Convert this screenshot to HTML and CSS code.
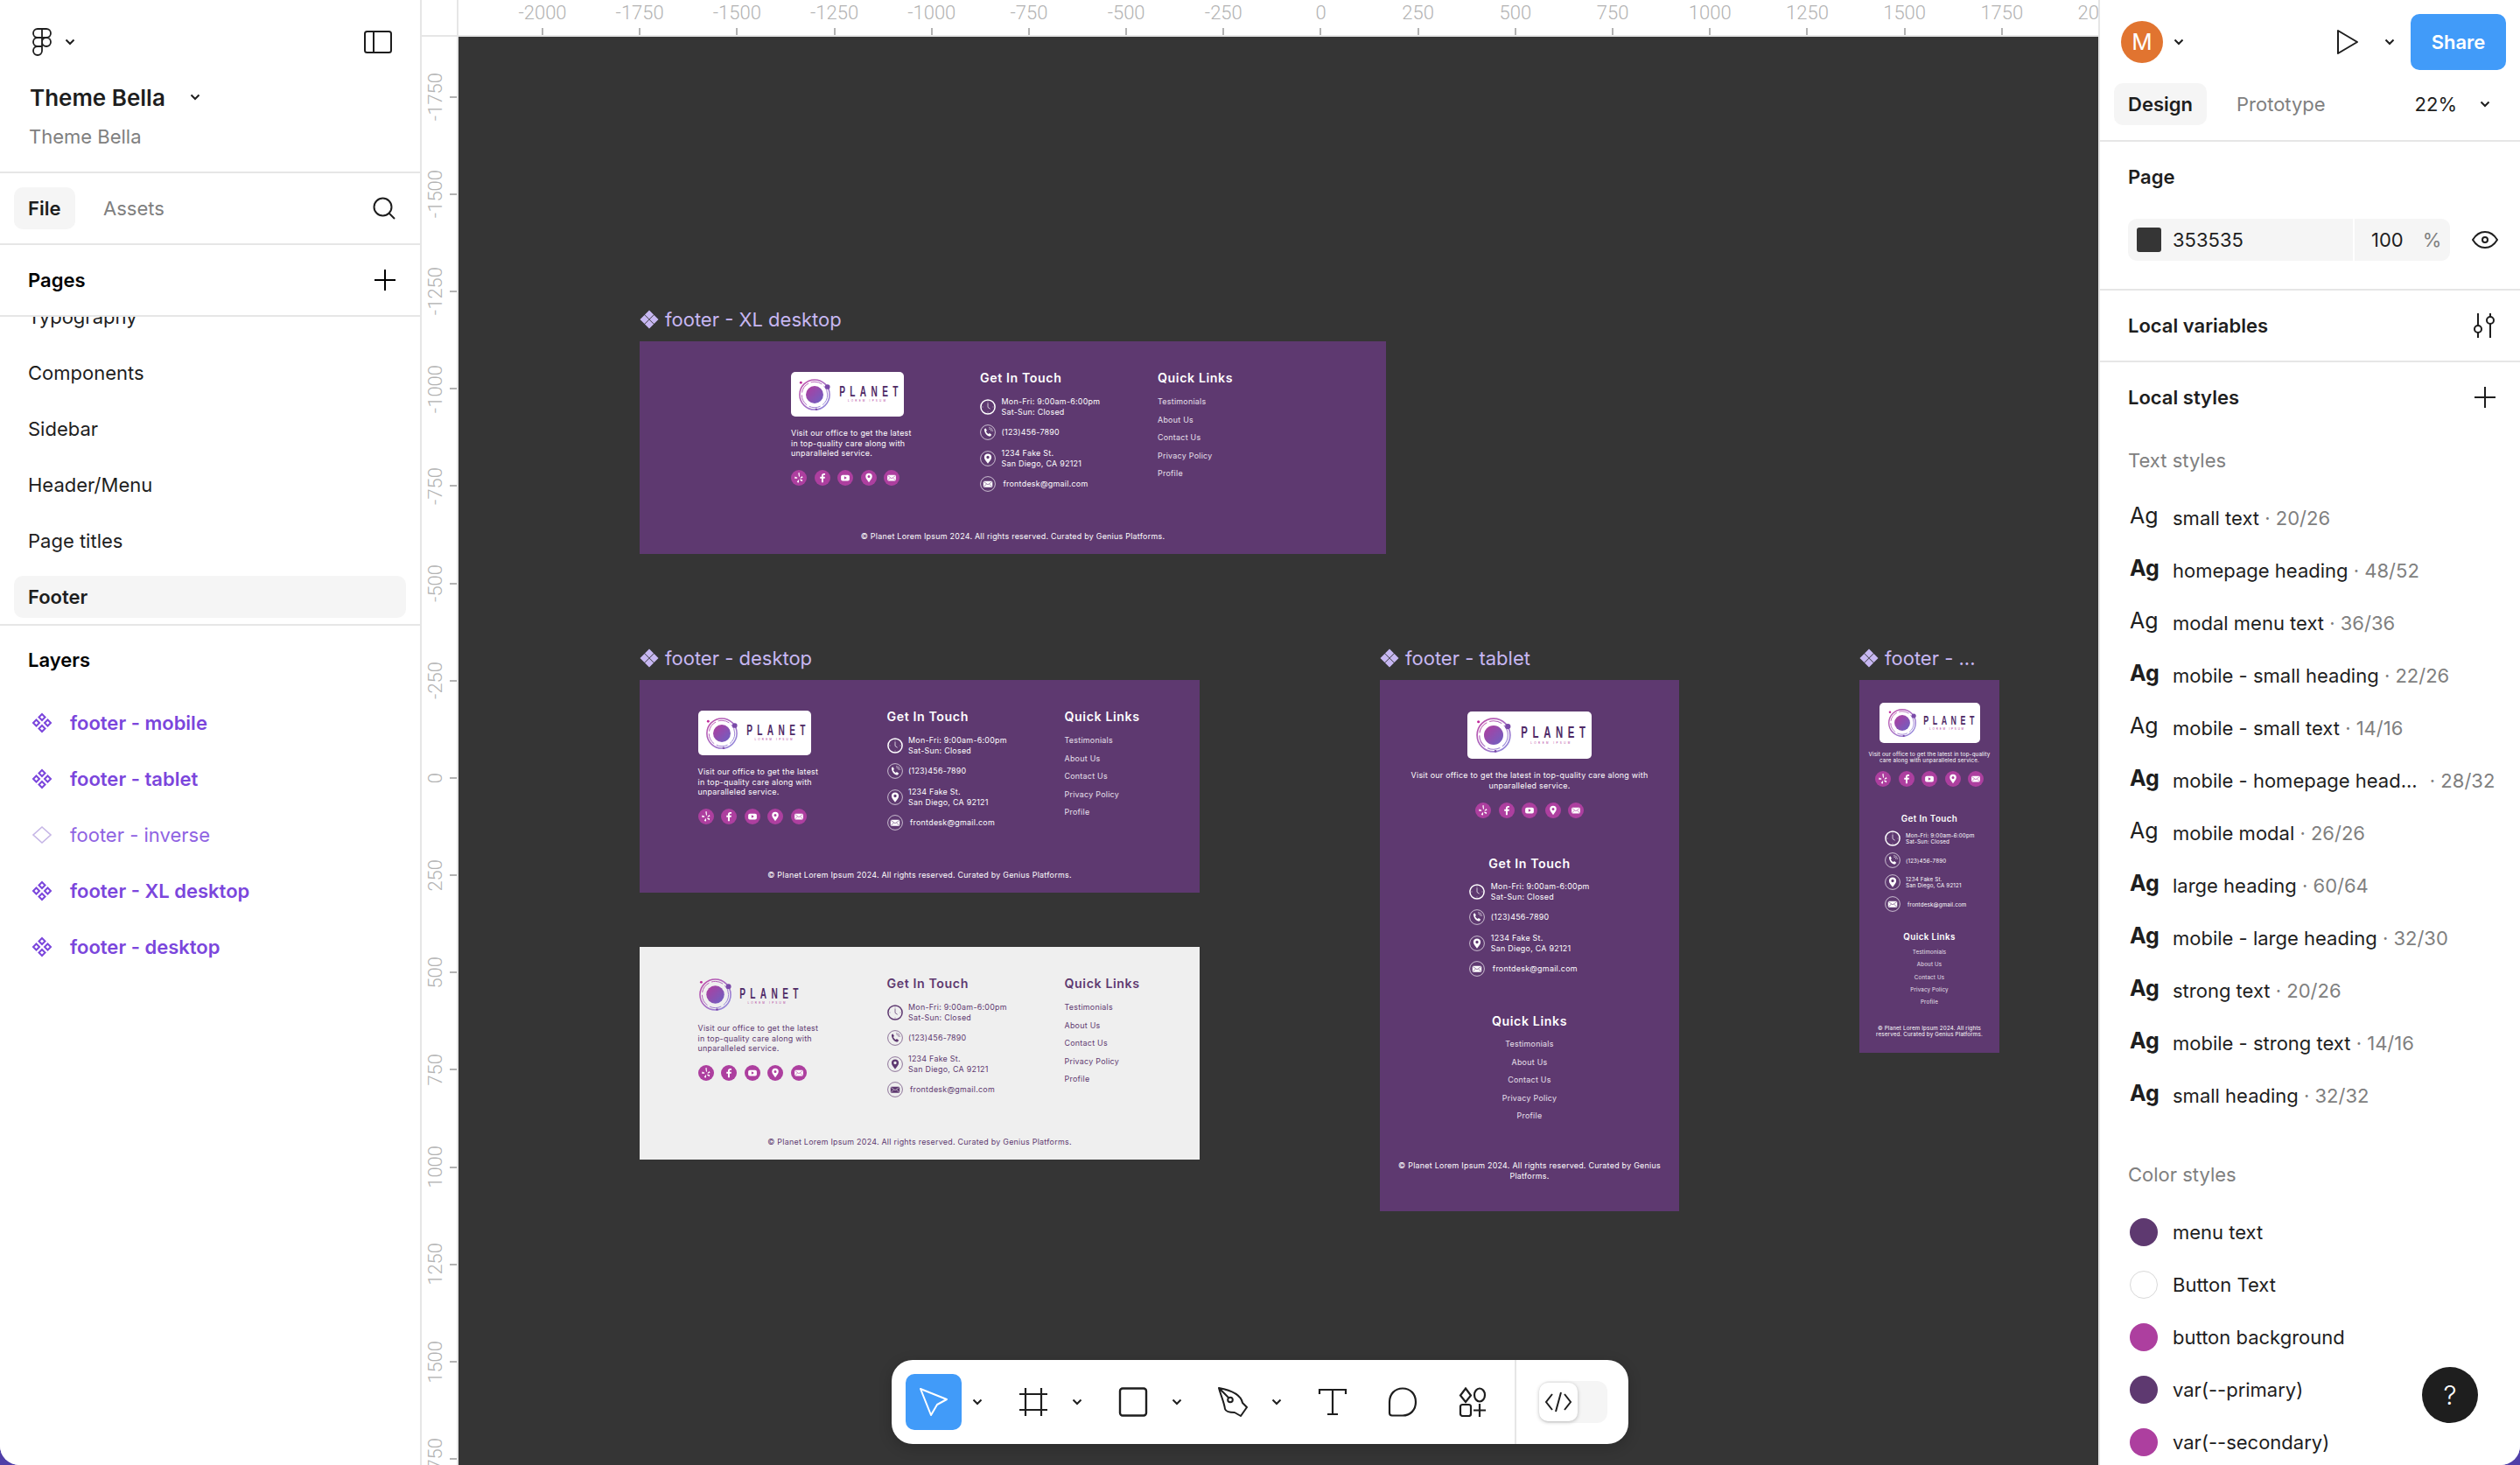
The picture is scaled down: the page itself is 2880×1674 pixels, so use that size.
FILE: index.html
```html
<!DOCTYPE html>
<html lang="en">
<head>
    <meta charset="UTF-8">
    <meta name="viewport" content="width=device-width, initial-scale=1.0">
    <title>Theme Bella</title>
    <link rel="stylesheet" href="styles.css">
</head>
<body>
    <!-- shared icons -->
    <svg class="sprite" aria-hidden="true">
        <defs>
            <linearGradient id="discGrad" x1="0" y1="0" x2="1" y2="1">
                <stop offset="0" stop-color="#b23c9c"/>
                <stop offset="1" stop-color="#6a62c4"/>
            </linearGradient>
            <linearGradient id="ringGrad" x1="0" y1="0" x2="1" y2="1">
                <stop offset="0" stop-color="#c04aa6"/>
                <stop offset="1" stop-color="#8f8fe0"/>
            </linearGradient>
        </defs>
        <symbol id="i-chev" viewBox="0 0 12 8"><path d="M1.5 1.5 6 6l4.500-4.500" fill="none" stroke="currentColor" stroke-width="2"/></symbol>
        <symbol id="i-comp" viewBox="0 0 24 24">
            <g fill="none" stroke="currentColor" stroke-width="2">
                <path d="M12 2l3.500 3.500L12 9 8.500 5.500z"/>
                <path d="M12 15l3.500 3.500L12 22l-3.500-3.500z"/>
                <path d="M5.500 8.500 9 12l-3.500 3.500L2 12z"/>
                <path d="M18.500 8.500 22 12l-3.500 3.500L15 12z"/>
            </g>
        </symbol>
        <symbol id="i-comp-fill" viewBox="0 0 24 24">
            <path d="M12 .5l5.500 5.500L12 11.500 6.500 6zM12 12.500l5.500 5.500L12 23.500 6.500 18zM6 6.500l5.500 5.500L6 17.500.5 12zM18 6.500l5.500 5.500-5.500 5.500-5.500-5.500z" fill="currentColor"/>
        </symbol>
        <symbol id="logo-mark" viewBox="0 0 40 40">
            <circle cx="20" cy="20" r="18" fill="none" stroke="url(#ringGrad)" stroke-width="1.600"/>
            <circle cx="20" cy="20" r="15.500" fill="none" stroke="url(#ringGrad)" stroke-width="1" stroke-dasharray="14 3"/>
            <circle cx="20" cy="20" r="10.500" fill="url(#discGrad)"/>
            <circle cx="35.500" cy="10.500" r="3" fill="#7a4aa8"/>
            <circle cx="3.500" cy="5.500" r="1.500" fill="#c02a9a"/>
            <circle cx="22" cy="37.500" r="1.300" fill="#7a4aa8"/>
        </symbol>
        <symbol id="c-clock" viewBox="0 0 24 24">
            <circle cx="12" cy="12" r="10.800" fill="none" stroke="currentColor" stroke-width="2"/>
            <path d="M12 6v6.500l3.500 2.500M12 3.500v1M12 19.500v1M3.500 12h1M19.500 12h1" fill="none" stroke="currentColor" stroke-width="1"/>
        </symbol>
        <symbol id="c-phone" viewBox="0 0 24 24">
            <circle cx="12" cy="12" r="11.200" fill="none" stroke="currentColor" stroke-width=".9"/>
            <path d="M8.500 5.500 10.500 9 9.300 10.500c.7 1.700 2 3 3.700 4l1.600-1.100 3 2.400-1.700 2.300C11.500 18.500 6.500 13 6.500 7.200z" fill="currentColor"/>
            <path d="M13.500 6.500a4.500 4.500 0 0 1 4 4M13.500 4.500a6.500 6.500 0 0 1 6 6" fill="none" stroke="currentColor" stroke-width=".7"/>
        </symbol>
        <symbol id="c-pin" viewBox="0 0 24 24">
            <circle cx="12" cy="12" r="11.200" fill="none" stroke="currentColor" stroke-width=".9"/>
            <path fill-rule="evenodd" d="M12 4.500a5.500 5.500 0 0 1 5.500 5.500c0 3.500-3.500 6.500-5.500 9.500-2-3-5.500-6-5.500-9.500A5.500 5.500 0 0 1 12 4.500zm0 3.300a2.200 2.200 0 1 0 0 4.400 2.200 2.200 0 0 0 0-4.400z" fill="currentColor"/>
        </symbol>
        <symbol id="c-mail" viewBox="0 0 24 24">
            <circle cx="12" cy="12" r="11.200" fill="none" stroke="currentColor" stroke-width=".9"/>
            <rect x="5" y="7.500" width="14" height="9.500" rx="1.500" fill="currentColor"/>
            <path class="mail-cut" d="M5.500 8.500 12 13l6.500-4.500M5.500 16.500 10 12M18.500 16.500 14 12" fill="none" stroke-width=".8"/>
        </symbol>
        <symbol id="s-yelp" viewBox="0 0 24 24">
            <circle cx="12" cy="12" r="12" fill="#ad3f9f"/>
            <path d="M11 4.500l1.800-.5.500 6-1.300.4zM6 10l3.800 1.500-.4 1.500L5.500 13zM9 18.500l2-3.500 1 .8v3.500zM14 14l3.500 1-.5 2.500-3.500-2.300zM14 12l3-2.700 1 2.200-3.500 1.500z" fill="#fff"/>
        </symbol>
        <symbol id="s-fb" viewBox="0 0 24 24">
            <circle cx="12" cy="12" r="12" fill="#ad3f9f"/>
            <path d="M13.200 19v-6h2.300l.4-2.600h-2.700V8.900c0-.8.300-1.300 1.400-1.300h1.400V5.300c-.3 0-1.100-.1-2-.1-2 0-3.400 1.200-3.400 3.500v1.700H8.300V13h2.300v6z" fill="#fff"/>
        </symbol>
        <symbol id="s-yt" viewBox="0 0 24 24">
            <circle cx="12" cy="12" r="12" fill="#ad3f9f"/>
            <rect x="5.500" y="7.500" width="13" height="9" rx="2.500" fill="#fff"/>
            <path d="M10.500 9.800 14.500 12l-4 2.200z" fill="#ad3f9f"/>
        </symbol>
        <symbol id="s-pin" viewBox="0 0 24 24">
            <circle cx="12" cy="12" r="12" fill="#ad3f9f"/>
            <path fill-rule="evenodd" d="M12 5a5 5 0 0 1 5 5c0 3-3 5.500-5 9-2-3.500-5-6-5-9a5 5 0 0 1 5-5zm0 3a2 2 0 1 0 0 4 2 2 0 0 0 0-4z" fill="#fff"/>
        </symbol>
        <symbol id="s-mail" viewBox="0 0 24 24">
            <circle cx="12" cy="12" r="12" fill="#ad3f9f"/>
            <rect x="5.500" y="7.500" width="13" height="9" rx="1.500" fill="#fff"/>
            <path d="M6 8.500 12 13l6-4.500M6 16 10 12M18 16 14 12" fill="none" stroke="#ad3f9f" stroke-width=".8"/>
        </symbol>
    </svg>

    <div class="app">
        <aside class="panel panel-left">
            <div class="file-head">
                <div class="file-top">
                    <svg class="figma-logo" viewBox="0 0 22 32" fill="none" stroke="currentColor" stroke-width="1.800">
                        <path d="M11 1H6a5 5 0 0 0 0 10h5zM11 1h5a5 5 0 0 1 0 10h-5zM11 11H6a5 5 0 0 0 0 10h5zM11 16a5 5 0 1 1 10 0 5 5 0 0 1-10 0zM11 21H6a5 5 0 1 0 5 5z"/>
                    </svg>
                    <svg class="chev chev-logo"><use href="#i-chev"/></svg>
                    <svg class="sidebar-icon" viewBox="0 0 32 26" fill="none" stroke="currentColor" stroke-width="2">
                        <rect x="1" y="1" width="30" height="24" rx="2.500"/>
                        <path d="M11 1v24"/>
                    </svg>
                </div>
                <div class="file-title">Theme Bella <svg class="chev"><use href="#i-chev"/></svg></div>
                <div class="file-sub">Theme Bella</div>
            </div>

            <div class="tabs-row">
                <span class="tab tab-on tab-file">File</span>
                <span class="tab">Assets</span>
                <svg class="search-icon" viewBox="0 0 26 26" fill="none" stroke="currentColor" stroke-width="2">
                    <circle cx="11.500" cy="11.500" r="10"/>
                    <path d="M18.500 18.500l6.500 6.500"/>
                </svg>
            </div>

            <div class="section-head pages-head">
                <span>Pages</span>
                <svg class="plus"><path d="M12 0v24M0 12h24" stroke="currentColor" stroke-width="2"/></svg>
            </div>

            <div class="page-list">
                <div class="page-item">Typography</div>
                <div class="page-item">Components</div>
                <div class="page-item">Sidebar</div>
                <div class="page-item">Header/Menu</div>
                <div class="page-item">Page titles</div>
                <div class="page-item page-on"><span>Footer</span></div>
            </div>

            <div class="layers">
                <div class="layers-title">Layers</div>
                <div class="layer"><svg><use href="#i-comp"/></svg>footer - mobile</div>
                <div class="layer"><svg><use href="#i-comp"/></svg>footer - tablet</div>
                <div class="layer layer-inverse">
                    <svg viewBox="0 0 24 24"><path d="M12 3l10 9-10 9-10-9z" fill="none" stroke="currentColor" stroke-width="1.600"/></svg>footer - inverse
                </div>
                <div class="layer"><svg><use href="#i-comp"/></svg>footer - XL desktop</div>
                <div class="layer"><svg><use href="#i-comp"/></svg>footer - desktop</div>
            </div>
        </aside>

        <div class="ruler-corner"></div>

        <div class="ruler-top">
            <div class="tick-h"><span>-2000</span></div>
            <div class="tick-h"><span>-1750</span></div>
            <div class="tick-h"><span>-1500</span></div>
            <div class="tick-h"><span>-1250</span></div>
            <div class="tick-h"><span>-1000</span></div>
            <div class="tick-h"><span>-750</span></div>
            <div class="tick-h"><span>-500</span></div>
            <div class="tick-h"><span>-250</span></div>
            <div class="tick-h"><span>0</span></div>
            <div class="tick-h"><span>250</span></div>
            <div class="tick-h"><span>500</span></div>
            <div class="tick-h"><span>750</span></div>
            <div class="tick-h"><span>1000</span></div>
            <div class="tick-h"><span>1250</span></div>
            <div class="tick-h"><span>1500</span></div>
            <div class="tick-h"><span>1750</span></div>
            <div class="tick-h"><span>2000</span></div>
        </div>

        <div class="ruler-left">
            <div class="tick-v"><span>-1750</span></div>
            <div class="tick-v"><span>-1500</span></div>
            <div class="tick-v"><span>-1250</span></div>
            <div class="tick-v"><span>-1000</span></div>
            <div class="tick-v"><span>-750</span></div>
            <div class="tick-v"><span>-500</span></div>
            <div class="tick-v"><span>-250</span></div>
            <div class="tick-v"><span>0</span></div>
            <div class="tick-v"><span>250</span></div>
            <div class="tick-v"><span>500</span></div>
            <div class="tick-v"><span>750</span></div>
            <div class="tick-v"><span>1000</span></div>
            <div class="tick-v"><span>1250</span></div>
            <div class="tick-v"><span>1500</span></div>
            <div class="tick-v"><span>1750</span></div>
        </div>

        <main class="canvas">
            <!-- XL desktop -->
            <section class="frame frame-xl">
                <div class="frame-label"><svg><use href="#i-comp-fill"/></svg>footer - XL desktop</div>
                <div class="footer">
                    <div class="footer-cols">
                        <div class="col-brand">
                            <div class="logo logo-box"><svg class="logo-mark"><use href="#logo-mark"/></svg><div class="logo-word"><b>PLANET</b><i>LOREM IPSUM</i></div></div>
                            <p class="desc">Visit our office to get the latest in top-quality care along with unparalleled service.</p>
                            <div class="socials"><svg><use href="#s-yelp"/></svg><svg><use href="#s-fb"/></svg><svg><use href="#s-yt"/></svg><svg><use href="#s-pin"/></svg><svg><use href="#s-mail"/></svg></div>
                        </div>
                        <div class="col-contact">
                            <h4>Get In Touch</h4>
                            <div class="contacts">
                                <div class="contact"><svg><use href="#c-clock"/></svg><span>Mon-Fri: 9:00am-6:00pm<br>Sat-Sun: Closed</span></div>
                                <div class="contact"><svg><use href="#c-phone"/></svg><span>(123)456-7890</span></div>
                                <div class="contact"><svg><use href="#c-pin"/></svg><span>1234 Fake St.<br>San Diego, CA 92121</span></div>
                                <div class="contact contact-mail"><svg><use href="#c-mail"/></svg><span>frontdesk@gmail.com</span></div>
                            </div>
                        </div>
                        <div class="col-links">
                            <h4>Quick Links</h4>
                            <ul class="links"><li>Testimonials</li><li>About Us</li><li>Contact Us</li><li>Privacy Policy</li><li>Profile</li></ul>
                        </div>
                    </div>
                    <p class="copy">© Planet Lorem Ipsum 2024. All rights reserved. Curated by Genius Platforms.</p>
                </div>
            </section>

            <!-- desktop -->
            <section class="frame frame-desktop">
                <div class="frame-label"><svg><use href="#i-comp-fill"/></svg>footer - desktop</div>
                <div class="footer">
                    <div class="footer-cols">
                        <div class="col-brand">
                            <div class="logo logo-box"><svg class="logo-mark"><use href="#logo-mark"/></svg><div class="logo-word"><b>PLANET</b><i>LOREM IPSUM</i></div></div>
                            <p class="desc">Visit our office to get the latest in top-quality care along with unparalleled service.</p>
                            <div class="socials"><svg><use href="#s-yelp"/></svg><svg><use href="#s-fb"/></svg><svg><use href="#s-yt"/></svg><svg><use href="#s-pin"/></svg><svg><use href="#s-mail"/></svg></div>
                        </div>
                        <div class="col-contact">
                            <h4>Get In Touch</h4>
                            <div class="contacts">
                                <div class="contact"><svg><use href="#c-clock"/></svg><span>Mon-Fri: 9:00am-6:00pm<br>Sat-Sun: Closed</span></div>
                                <div class="contact"><svg><use href="#c-phone"/></svg><span>(123)456-7890</span></div>
                                <div class="contact"><svg><use href="#c-pin"/></svg><span>1234 Fake St.<br>San Diego, CA 92121</span></div>
                                <div class="contact contact-mail"><svg><use href="#c-mail"/></svg><span>frontdesk@gmail.com</span></div>
                            </div>
                        </div>
                        <div class="col-links">
                            <h4>Quick Links</h4>
                            <ul class="links"><li>Testimonials</li><li>About Us</li><li>Contact Us</li><li>Privacy Policy</li><li>Profile</li></ul>
                        </div>
                    </div>
                    <p class="copy">© Planet Lorem Ipsum 2024. All rights reserved. Curated by Genius Platforms.</p>
                </div>
            </section>

            <!-- inverse -->
            <section class="frame frame-inverse">
                <div class="footer footer-inverse">
                    <div class="footer-cols">
                        <div class="col-brand">
                            <div class="logo"><svg class="logo-mark"><use href="#logo-mark"/></svg><div class="logo-word"><b>PLANET</b><i>LOREM IPSUM</i></div></div>
                            <p class="desc">Visit our office to get the latest in top-quality care along with unparalleled service.</p>
                            <div class="socials"><svg><use href="#s-yelp"/></svg><svg><use href="#s-fb"/></svg><svg><use href="#s-yt"/></svg><svg><use href="#s-pin"/></svg><svg><use href="#s-mail"/></svg></div>
                        </div>
                        <div class="col-contact">
                            <h4>Get In Touch</h4>
                            <div class="contacts">
                                <div class="contact"><svg><use href="#c-clock"/></svg><span>Mon-Fri: 9:00am-6:00pm<br>Sat-Sun: Closed</span></div>
                                <div class="contact"><svg><use href="#c-phone"/></svg><span>(123)456-7890</span></div>
                                <div class="contact"><svg><use href="#c-pin"/></svg><span>1234 Fake St.<br>San Diego, CA 92121</span></div>
                                <div class="contact contact-mail"><svg><use href="#c-mail"/></svg><span>frontdesk@gmail.com</span></div>
                            </div>
                        </div>
                        <div class="col-links">
                            <h4>Quick Links</h4>
                            <ul class="links"><li>Testimonials</li><li>About Us</li><li>Contact Us</li><li>Privacy Policy</li><li>Profile</li></ul>
                        </div>
                    </div>
                    <p class="copy">© Planet Lorem Ipsum 2024. All rights reserved. Curated by Genius Platforms.</p>
                </div>
            </section>

            <!-- tablet -->
            <section class="frame frame-tablet">
                <div class="frame-label"><svg><use href="#i-comp-fill"/></svg>footer - tablet</div>
                <div class="footer footer-stack">
                    <div class="footer-cols">
                        <div class="col-brand">
                            <div class="logo logo-box"><svg class="logo-mark"><use href="#logo-mark"/></svg><div class="logo-word"><b>PLANET</b><i>LOREM IPSUM</i></div></div>
                            <p class="desc">Visit our office to get the latest in top-quality care along with unparalleled service.</p>
                            <div class="socials"><svg><use href="#s-yelp"/></svg><svg><use href="#s-fb"/></svg><svg><use href="#s-yt"/></svg><svg><use href="#s-pin"/></svg><svg><use href="#s-mail"/></svg></div>
                        </div>
                        <div class="col-contact">
                            <h4>Get In Touch</h4>
                            <div class="contacts">
                                <div class="contact"><svg><use href="#c-clock"/></svg><span>Mon-Fri: 9:00am-6:00pm<br>Sat-Sun: Closed</span></div>
                                <div class="contact"><svg><use href="#c-phone"/></svg><span>(123)456-7890</span></div>
                                <div class="contact"><svg><use href="#c-pin"/></svg><span>1234 Fake St.<br>San Diego, CA 92121</span></div>
                                <div class="contact contact-mail"><svg><use href="#c-mail"/></svg><span>frontdesk@gmail.com</span></div>
                            </div>
                        </div>
                        <div class="col-links">
                            <h4>Quick Links</h4>
                            <ul class="links"><li>Testimonials</li><li>About Us</li><li>Contact Us</li><li>Privacy Policy</li><li>Profile</li></ul>
                        </div>
                    </div>
                    <p class="copy">© Planet Lorem Ipsum 2024. All rights reserved. Curated by Genius Platforms.</p>
                </div>
            </section>

            <!-- mobile -->
            <section class="frame frame-mobile">
                <div class="frame-label"><svg><use href="#i-comp-fill"/></svg>footer - ...</div>
                <div class="footer footer-stack footer-mobile">
                    <div class="footer-cols">
                        <div class="col-brand">
                            <div class="logo logo-box"><svg class="logo-mark"><use href="#logo-mark"/></svg><div class="logo-word"><b>PLANET</b><i>LOREM IPSUM</i></div></div>
                            <p class="desc">Visit our office to get the latest in top-quality care along with unparalleled service.</p>
                            <div class="socials"><svg><use href="#s-yelp"/></svg><svg><use href="#s-fb"/></svg><svg><use href="#s-yt"/></svg><svg><use href="#s-pin"/></svg><svg><use href="#s-mail"/></svg></div>
                        </div>
                        <div class="col-contact">
                            <h4>Get In Touch</h4>
                            <div class="contacts">
                                <div class="contact"><svg><use href="#c-clock"/></svg><span>Mon-Fri: 9:00am-6:00pm<br>Sat-Sun: Closed</span></div>
                                <div class="contact"><svg><use href="#c-phone"/></svg><span>(123)456-7890</span></div>
                                <div class="contact"><svg><use href="#c-pin"/></svg><span>1234 Fake St.<br>San Diego, CA 92121</span></div>
                                <div class="contact contact-mail"><svg><use href="#c-mail"/></svg><span>frontdesk@gmail.com</span></div>
                            </div>
                        </div>
                        <div class="col-links">
                            <h4>Quick Links</h4>
                            <ul class="links"><li>Testimonials</li><li>About Us</li><li>Contact Us</li><li>Privacy Policy</li><li>Profile</li></ul>
                        </div>
                    </div>
                    <p class="copy">© Planet Lorem Ipsum 2024. All rights reserved. Curated by Genius Platforms.</p>
                </div>
            </section>

            <!-- bottom toolbar -->
            <div class="toolbar">
                <button class="tool tool-on">
                    <svg viewBox="0 0 34 34" fill="none" stroke="currentColor" stroke-width="2" stroke-linejoin="round"><path d="M2 2 32 14 21 20 14 32z"/></svg>
                </button>
                <svg class="chev tool-chev"><use href="#i-chev"/></svg>
                <button class="tool">
                    <svg viewBox="0 0 34 34" fill="none" stroke="currentColor" stroke-width="2.200"><path d="M1 8h32M1 26h32M8 1v32M26 1v32"/></svg>
                </button>
                <svg class="chev tool-chev"><use href="#i-chev"/></svg>
                <button class="tool">
                    <svg viewBox="0 0 34 34" fill="none" stroke="currentColor" stroke-width="2.400"><rect x="2" y="1.500" width="30" height="31" rx="3"/></svg>
                </button>
                <svg class="chev tool-chev"><use href="#i-chev"/></svg>
                <button class="tool">
                    <svg viewBox="0 0 34 34" fill="none" stroke="currentColor" stroke-width="2" stroke-linejoin="round"><path d="M1 1C12 3 26 8 28 18L33 23 26 33 19 29C14 29 9 28 8 25 7 17 3 9 1 1zM1 1 12 12"/><circle cx="14" cy="14.500" r="2.800"/></svg>
                </button>
                <svg class="chev tool-chev"><use href="#i-chev"/></svg>
                <button class="tool">
                    <svg viewBox="0 0 34 34" fill="none" stroke="currentColor" stroke-width="2.200"><path d="M2 8V3h30v5M17 3v28M11 31h12"/></svg>
                </button>
                <button class="tool tool-gap">
                    <svg viewBox="0 0 34 34" fill="none" stroke="currentColor" stroke-width="2.200"><path d="M2 17C2 8 8 1.500 17 1.500S32 8 32 17 26 32.500 17 32.500H5C3 32.500 2 31.500 2 29.500z"/></svg>
                </button>
                <button class="tool tool-gap">
                    <svg viewBox="0 0 34 34" fill="none" stroke="currentColor" stroke-width="2.200"><path d="M9 1.500l6 8-6 7.500-6-7.500z"/><ellipse cx="25" cy="9" rx="6" ry="7.500"/><rect x="3" y="20" width="12" height="13" rx="2.500"/><path d="M25 19v15M18 26.500h14"/></svg>
                </button>
                <div class="tool-divider"></div>
                <div class="code-toggle">
                    <span class="code-thumb">
                        <svg viewBox="0 0 32 24" fill="none" stroke="currentColor" stroke-width="2"><path d="M9 3 2 12l7 9M23 3l7 9-7 9M19 1l-6 22"/></svg>
                    </span>
                </div>
            </div>
        </main>

        <aside class="panel panel-right">
            <div class="top-row">
                <span class="avatar">M</span>
                <svg class="chev chev-avatar"><use href="#i-chev"/></svg>
                <svg class="play" viewBox="0 0 26 30" fill="none" stroke="currentColor" stroke-width="2" stroke-linejoin="round"><path d="M2 2 24 15 2 28z"/></svg>
                <svg class="chev chev-play"><use href="#i-chev"/></svg>
                <span class="share">Share</span>
            </div>
            <div class="design-row">
                <span class="tab tab-on tab-design">Design</span>
                <span class="tab tab-proto">Prototype</span>
                <span class="zoom-val">22%</span>
                <svg class="chev chev-zoom"><use href="#i-chev"/></svg>
            </div>

            <section class="page-block">
                <div class="block-title">Page</div>
                <div class="color-row">
                    <div class="color-input">
                        <span class="swatch"></span>
                        <span class="hex">353535</span>
                        <span class="opacity">100</span>
                        <span class="percent">%</span>
                    </div>
                    <svg class="eye" viewBox="0 0 30 20" fill="none" stroke="currentColor" stroke-width="2"><path d="M1 10C5 3.500 10 1 15 1s10 2.500 14 9c-4 6.500-9 9-14 9S5 16.500 1 10z"/><circle cx="15" cy="10" r="3"/></svg>
                </div>
            </section>

            <div class="section-head right-head vars-head">
                <span>Local variables</span>
                <svg class="vars-icon" viewBox="0 0 26 30" fill="none" stroke="currentColor" stroke-width="2"><path d="M6 1v14M6 23v6M20 1v4M20 13v16"/><circle cx="6" cy="19" r="4"/><circle cx="20" cy="9" r="4"/></svg>
            </div>

            <div class="section-head right-head styles-head">
                <span>Local styles</span>
                <svg class="plus"><path d="M12 0v24M0 12h24" stroke="currentColor" stroke-width="2"/></svg>
            </div>

            <div class="caption">Text styles</div>
            <ul class="style-list">
                <li><b class="ag">Ag</b><span>small text</span><em> · 20/26</em></li>
                <li><b class="ag ag-bold">Ag</b><span>homepage heading</span><em> · 48/52</em></li>
                <li><b class="ag">Ag</b><span>modal menu text</span><em> · 36/36</em></li>
                <li><b class="ag ag-bold">Ag</b><span>mobile - small heading</span><em> · 22/26</em></li>
                <li><b class="ag">Ag</b><span>mobile - small text</span><em> · 14/16</em></li>
                <li><b class="ag ag-bold">Ag</b><span>mobile - homepage head...</span><em class="em-gap"> · 28/32</em></li>
                <li><b class="ag">Ag</b><span>mobile modal</span><em> · 26/26</em></li>
                <li><b class="ag ag-bold">Ag</b><span>large heading</span><em> · 60/64</em></li>
                <li><b class="ag ag-bold">Ag</b><span>mobile - large heading</span><em> · 32/30</em></li>
                <li><b class="ag ag-bold">Ag</b><span>strong text</span><em> · 20/26</em></li>
                <li><b class="ag ag-bold">Ag</b><span>mobile - strong text</span><em> · 14/16</em></li>
                <li><b class="ag ag-bold">Ag</b><span>small heading</span><em> · 32/32</em></li>
            </ul>

            <div class="caption caption-color">Color styles</div>
            <ul class="style-list">
                <li><i class="dot dot-primary"></i><span>menu text</span></li>
                <li><i class="dot dot-white"></i><span>Button Text</span></li>
                <li><i class="dot dot-secondary"></i><span>button background</span></li>
                <li><i class="dot dot-primary"></i><span>var(--primary)</span></li>
                <li><i class="dot dot-secondary"></i><span>var(--secondary)</span></li>
            </ul>

            <span class="help">?</span>
        </aside>
    </div>
</body>
</html>
```

FILE: styles.css
```css
* {
    box-sizing: border-box;
}
html, body {
    margin: 0;
    padding: 0;
    height: 1674px;
    overflow: hidden;
}
body {
    font-family: Inter, "Noto Sans", sans-serif;
    font-size: 22px;
    color: #1e1e1e;
    background: #503fa8;
}
.sprite {
    position: absolute;
    width: 0;
    height: 0;
}
.app {
    display: grid;
    grid-template-columns: 482px 42px 1fr 482px;
    grid-template-rows: 42px 1fr;
    width: 2880px;
    height: 1674px;
    background: #fff;
    border-radius: 0 0 22px 22px;
    overflow: hidden;
}

/* panels */
.panel {
    grid-row: 1 / 3;
    background: #fff;
    overflow: hidden;
    position: relative;
}
.panel-left {
    grid-column: 1;
    border-right: 2px solid #e6e6e6;
}
.panel-right {
    grid-column: 4;
    border-left: 2px solid #e6e6e6;
}
.chev {
    width: 12px;
    height: 8px;
    color: #1e1e1e;
    flex: none;
}
.file-head {
    height: 198px;
    border-bottom: 2px solid #e6e6e6;
    padding: 32px 33px 0;
}
.file-top {
    display: flex;
    align-items: center;
    height: 32px;
}
.figma-logo {
    width: 22px;
    height: 32px;
    margin-left: 4px;
}
.chev-logo {
    margin-left: 15px;
}
.sidebar-icon {
    width: 32px;
    height: 26px;
    margin-left: auto;
    margin-right: -1px;
}
.file-title {
    display: flex;
    align-items: center;
    margin-top: 29px;
    height: 36px;
    padding-left: 1px;
    font-size: 26px;
    font-weight: 600;
    white-space: pre;
}
.file-title .chev {
    margin-left: 22px;
}
.file-sub {
    margin-top: 11px;
    color: #808080;
    line-height: 32px;
}
.tabs-row {
    display: flex;
    align-items: center;
    gap: 16px;
    height: 82px;
    padding: 0 28px 0 16px;
    border-bottom: 2px solid #e6e6e6;
}
.tab {
    display: block;
    height: 48px;
    line-height: 48px;
    padding: 0 16px;
    color: #808080;
    border-radius: 10px;
}
.tab-on {
    color: #1e1e1e;
    font-weight: 600;
    background: #f5f5f5;
}
.tab-file {
    width: 70px;
}
.search-icon {
    width: 26px;
    height: 26px;
    margin-left: auto;
}
.section-head {
    display: flex;
    align-items: center;
    justify-content: space-between;
    font-weight: 600;
    border-bottom: 2px solid #e6e6e6;
}
.pages-head {
    height: 82px;
    padding: 0 28px 0 32px;
    color: #000;
}
.plus {
    width: 24px;
    height: 24px;
}
.page-list {
    height: 351px;
    overflow: hidden;
    border-bottom: 0;
}
.page-item {
    height: 64px;
    line-height: 64px;
    padding-left: 32px;
}
.page-item:first-child {
    margin-top: -32px;
}
.page-on {
    padding: 8px 16px 8px;
    line-height: 48px;
    font-weight: 600;
}
.page-on span {
    display: block;
    height: 48px;
    padding-left: 16px;
    background: #f5f5f5;
    border-radius: 10px;
}
.layers {
    border-top: 2px solid #e6e6e6;
}
.layers-title {
    height: 79px;
    line-height: 78px;
    padding-left: 32px;
    font-weight: 600;
    color: #000;
}
.layer {
    display: flex;
    align-items: center;
    gap: 20px;
    height: 64px;
    padding-left: 36px;
    color: #7b46dc;
    font-weight: 600;
}
.layer svg {
    width: 24px;
    height: 24px;
}
.layer-inverse {
    color: #8f63e2;
    font-weight: 400;
}
.layer-inverse svg {
    color: #c5b5e6;
}

/* rulers */
.ruler-corner {
    grid-column: 2;
    grid-row: 1;
    border-bottom: 2px solid #e6e6e6;
    border-right: 2px solid #e6e6e6;
}
.ruler-top {
    grid-column: 3;
    grid-row: 1;
    display: flex;
    padding-left: 40.400px;
    border-bottom: 2px solid #e6e6e6;
    overflow: hidden;
    font-family: Roboto, sans-serif;
    font-size: 22px;
    font-weight: 300;
    color: #b3b3b3;
}
.tick-h {
    flex: none;
    width: 111.200px;
    height: 40px;
    text-align: center;
    position: relative;
    line-height: 30px;
}
.tick-h::after {
    content: "";
    position: absolute;
    left: 54.600px;
    top: 32px;
    width: 2px;
    height: 8px;
    background: #b3b3b3;
}
.ruler-left {
    grid-column: 2;
    grid-row: 2;
    padding-top: 13px;
    height: 1632px;
    overflow: hidden;
    border-right: 2px solid #e6e6e6;
    font-family: Roboto, sans-serif;
    font-size: 22px;
    font-weight: 300;
    color: #b3b3b3;
}
.tick-v {
    display: flex;
    align-items: center;
    justify-content: center;
    width: 40px;
    height: 111.200px;
    position: relative;
    padding-right: 10px;
}
.tick-v span {
    writing-mode: vertical-rl;
    transform: rotate(180deg);
}
.tick-v::after {
    content: "";
    position: absolute;
    right: 0;
    top: 54.600px;
    width: 8px;
    height: 2px;
    background: #b3b3b3;
}

/* canvas */
.canvas {
    grid-column: 3;
    grid-row: 2;
    position: relative;
    background: #353535;
    overflow: hidden;
}
.frame {
    position: absolute;
}
.frame-xl {
    left: 207px;
    top: 348px;
    width: 853px;
    height: 243px;
}
.frame-desktop {
    left: 207px;
    top: 735px;
    width: 640px;
    height: 243px;
}
.frame-inverse {
    left: 207px;
    top: 1040px;
    width: 640px;
    height: 243px;
}
.frame-tablet {
    left: 1053px;
    top: 735px;
    width: 342px;
    height: 607px;
}
.frame-mobile {
    left: 1601px;
    top: 735px;
    width: 160px;
    height: 426px;
}
.frame-label {
    position: absolute;
    left: 0;
    top: -41px;
    display: flex;
    align-items: center;
    gap: 7px;
    height: 32px;
    color: #c7b7f2;
    white-space: nowrap;
}
.frame-label svg {
    width: 22px;
    height: 22px;
}

/* footer component */
.footer {
    --mail-cut: #5e3970;
    display: flex;
    flex-direction: column;
    justify-content: space-between;
    height: 100%;
    background: #5e3970;
    color: #fff;
    font-size: 8.900px;
    line-height: 11.500px;
    letter-spacing: .27px;
    padding: 35px 0 15px;
}
.mail-cut {
    stroke: var(--mail-cut);
}
.footer p,
.footer h4,
.footer ul {
    margin: 0;
    padding: 0;
}
.footer ul {
    list-style: none;
}
.footer-cols {
    display: grid;
    grid-template-columns: 216px 203px 88px;
    justify-content: center;
}
.footer h4 {
    font-size: 14.200px;
    line-height: 14px;
    letter-spacing: .6px;
    font-weight: 600;
    white-space: nowrap;
    margin-bottom: 14px;
}
.logo {
    display: flex;
    align-items: center;
    gap: 8px;
    letter-spacing: 0;
}
.logo-box {
    width: 129px;
    height: 51px;
    padding-left: 8px;
    background: #fff;
    border-radius: 5px;
}
.logo-mark {
    width: 38px;
    height: 38px;
    flex: none;
}
.logo-word {
    display: flex;
    flex-direction: column;
    align-items: center;
    flex: none;
    width: 67px;
    color: #4f2a66;
    font-family: "Liberation Sans", Roboto, sans-serif;
}
.logo-word b {
    font-size: 16px;
    line-height: 15px;
    letter-spacing: 8.500px;
    margin-right: -8.500px;
    white-space: nowrap;
    transform: scaleX(.63);
}
.logo-word i {
    font-style: normal;
    font-size: 3px;
    line-height: 6px;
    letter-spacing: 2.200px;
    color: #b23c9c;
    white-space: nowrap;
}
.desc {
    max-width: 145px;
    margin-top: 13px !important;
}
.socials {
    display: flex;
    gap: 8.500px;
    margin-top: 13px;
}
.socials svg {
    width: 18px;
    height: 18px;
}
.contacts {
    display: flex;
    flex-direction: column;
    gap: 9px;
}
.contact {
    display: flex;
    align-items: center;
    gap: 6.500px;
    white-space: nowrap;
}
.contact svg {
    width: 18px;
    height: 18px;
    flex: none;
}
.contact-mail span {
    margin-left: 2px;
}
.links {
    display: flex;
    flex-direction: column;
    gap: 9px;
    color: #e8e0ec;
    white-space: nowrap;
}
.copy {
    text-align: center;
}

/* inverse */
.footer-inverse {
    --mail-cut: #efefef;
    background: #efefef;
    color: #5e3970;
}
.footer-inverse .links {
    color: #5e3970;
}
.footer-inverse .logo {
    gap: 7px;
}
.footer-inverse .logo-mark {
    width: 39px;
    height: 39px;
}
.footer-inverse .logo-word b {
    margin-top: 3px;
}

/* stacked footers (tablet, mobile) */
.footer-stack {
    text-align: center;
    padding: 36px 0 35px;
}
.footer-stack .footer-cols {
    display: flex;
    flex-direction: column;
    align-items: center;
}
.footer-stack .col-brand {
    display: flex;
    flex-direction: column;
    align-items: center;
    width: 300px;
}
.footer-stack .logo-box {
    width: 142px;
    height: 54px;
    padding-left: 9px;
}
.footer-stack .logo-mark {
    width: 42px;
    height: 42px;
}
.footer-stack .logo-word {
    width: 74px;
}
.footer-stack .logo-word b {
    font-size: 18px;
    line-height: 17px;
    letter-spacing: 9px;
    margin-right: -9px;
}
.footer-stack .logo-word i {
    letter-spacing: 2.400px;
}
.footer-stack .desc {
    max-width: 300px;
}
.footer-stack .socials {
    margin-top: 14px;
}
.footer-stack .col-contact {
    margin-top: 45px;
    display: flex;
    flex-direction: column;
    align-items: center;
}
.footer-stack .contacts {
    text-align: left;
}
.footer-stack h4 {
    margin-bottom: 13px;
}
.footer-stack .col-links {
    margin-top: 44px;
}
.footer-stack .copy {
    padding: 0 20px;
}

/* mobile sizes */
.footer-mobile {
    font-size: 6.200px;
    line-height: 7.100px;
    letter-spacing: .18px;
    padding: 26px 0 18px;
}
.footer-mobile h4 {
    font-size: 9.800px;
    line-height: 11px;
    letter-spacing: .4px;
    margin-bottom: 8.500px;
}
.footer-mobile .col-brand {
    width: 160px;
}
.footer-mobile .logo-box {
    width: 115px;
    height: 46px;
    padding-left: 9px;
    gap: 6px;
}
.footer-mobile .logo-mark {
    width: 34px;
    height: 34px;
}
.footer-mobile .logo-word {
    width: 58px;
}
.footer-mobile .logo-word b {
    font-size: 14px;
    line-height: 14px;
    letter-spacing: 7.200px;
    margin-right: -7.200px;
}
.footer-mobile .logo-word i {
    letter-spacing: 1.800px;
}
.footer-mobile .desc {
    max-width: 148px;
    margin-top: 8.500px !important;
}
.footer-mobile .socials {
    margin-top: 9.500px;
}
.footer-mobile .col-contact {
    margin-top: 30.500px;
}
.footer-mobile .contacts {
    gap: 7px;
}
.footer-mobile .col-links {
    margin-top: 22.500px;
}
.footer-mobile .links {
    gap: 7.200px;
}
.footer-mobile .copy {
    padding: 0 10px;
}

/* toolbar */
.toolbar {
    position: absolute;
    left: 495px;
    top: 1512px;
    width: 842px;
    height: 96px;
    display: flex;
    align-items: center;
    padding-left: 16px;
    background: #fff;
    border-radius: 24px;
    box-shadow: 0 4px 16px rgba(0,0,0,0.2);
}
.tool {
    flex: none;
    display: flex;
    align-items: center;
    justify-content: center;
    width: 64px;
    height: 64px;
    padding: 0;
    border: 0;
    background: none;
    color: #1e1e1e;
    border-radius: 10px;
}
.tool svg {
    width: 34px;
    height: 34px;
}
.tool-on {
    background: #419bf9;
    color: #fff;
}
.tool-chev {
    width: 36px;
    padding: 0 12px;
    margin-right: 14px;
    box-sizing: border-box;
}
.tool-gap {
    margin-left: 16px;
}
.tool-divider {
    width: 2px;
    height: 96px;
    margin-left: 16px;
    background: #e6e6e6;
}
.code-toggle {
    width: 78px;
    height: 48px;
    margin-left: 26px;
    background: #f5f5f5;
    border-radius: 12px;
    display: flex;
    align-items: center;
}
.code-thumb {
    display: flex;
    align-items: center;
    justify-content: center;
    width: 44px;
    height: 44px;
    background: #fff;
    border-radius: 10px;
    box-shadow: 0 1px 4px rgba(0,0,0,0.25);
}
.code-thumb svg {
    width: 32px;
    height: 24px;
}

/* right panel */
.top-row {
    display: flex;
    align-items: center;
    height: 96px;
    padding: 0 16px 0 24px;
}
.avatar {
    width: 48px;
    height: 48px;
    border-radius: 50%;
    background: #e17430;
    color: #fff;
    text-align: center;
    line-height: 48px;
    font-size: 26px;
}
.chev-avatar {
    margin-left: 12px;
}
.play {
    width: 26px;
    height: 30px;
    margin-left: 174px;
}
.chev-play {
    margin-left: 29px;
}
.share {
    width: 109px;
    height: 64px;
    margin-left: 18px;
    line-height: 64px;
    text-align: center;
    color: #fff;
    font-weight: 600;
    background: #419bf9;
    border-radius: 10px;
}
.design-row {
    display: flex;
    align-items: center;
    height: 66px;
    padding: 0 34px 18px 16px;
    border-bottom: 2px solid #e6e6e6;
}
.tab-design {
    width: 106px;
    padding: 0;
    text-align: center;
}
.tab-proto {
    margin-left: 18px;
}
.zoom-val {
    margin-left: auto;
}
.chev-zoom {
    margin-left: 26px;
}
.page-block {
    height: 170px;
    padding-left: 32px;
    border-bottom: 2px solid #e6e6e6;
}
.block-title {
    font-weight: 600;
    line-height: 32px;
    padding-top: 24px;
    height: 88px;
}
.color-row {
    display: flex;
    align-items: center;
}
.color-input {
    display: flex;
    align-items: center;
    flex: none;
    width: 368px;
    height: 48px;
    padding-left: 10px;
    background: #f5f5f5;
    border-radius: 10px;
}
.swatch {
    width: 28px;
    height: 28px;
    background: #353535;
    border-radius: 3px;
}
.hex {
    width: 208px;
    margin-left: 13px;
    height: 48px;
    line-height: 48px;
    border-right: 2px solid #fff;
}
.opacity {
    margin-left: 19px;
}
.percent {
    margin-left: 22px;
    color: #808080;
}
.eye {
    width: 30px;
    height: 20px;
    margin-left: 25px;
}
.right-head {
    height: 82px;
    padding: 0 28px 0 32px;
    border-bottom: 2px solid #e6e6e6;
}
.vars-icon {
    width: 26px;
    height: 30px;
}
.styles-head {
    height: 80px;
    border-bottom: 0;
}
.caption {
    height: 64px;
    line-height: 64px;
    padding-left: 32px;
    color: #808080;
}
.caption-color {
    margin-top: 28px;
}
.style-list {
    list-style: none;
    margin: 4px 0 0;
    padding: 0 0 0 34px;
}
.style-list li {
    display: flex;
    align-items: center;
    height: 60px;
    white-space: pre;
}
.style-list em {
    font-style: normal;
    color: #808080;
}
.em-gap {
    margin-left: 8px;
}
.ag {
    flex: none;
    width: 49px;
    font-weight: 400;
    font-size: 25px;
    margin-top: -6px;
}
.ag-bold {
    font-weight: 700;
}
.dot {
    flex: none;
    width: 32px;
    height: 32px;
    margin-right: 17px;
    border-radius: 50%;
}
.dot-primary {
    background: #5e3970;
}
.dot-secondary {
    background: #ad3f9f;
}
.dot-white {
    background: #fff;
    border: 1px solid #d9d9d9;
}
.help {
    position: absolute;
    left: 368px;
    top: 1562px;
    width: 64px;
    height: 64px;
    line-height: 64px;
    text-align: center;
    border-radius: 50%;
    background: #1e1e1e;
    color: #fff;
    font-size: 30px;
    font-weight: 300;
}
```
